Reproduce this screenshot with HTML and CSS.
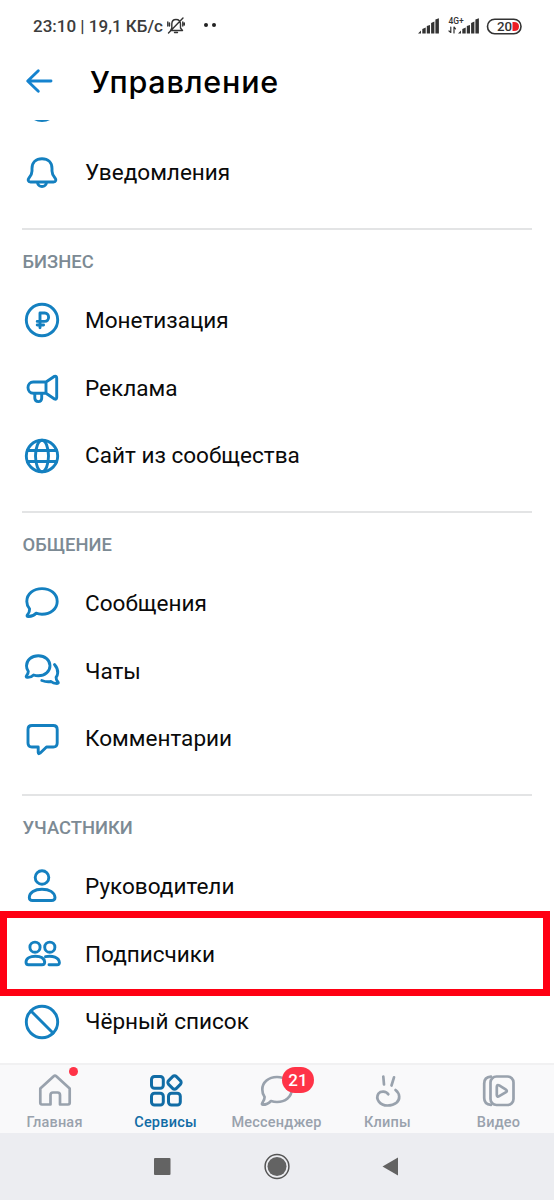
FILE: index.html
```html
<!DOCTYPE html>
<html lang="ru">
<head>
<meta charset="utf-8">
<title>Управление</title>
<link rel="stylesheet" href="styles.css">
</head>
<body>
<div class="screen">
  <div class="status">
    <span class="clock">23:10 | 19,1 КБ/с</span>
    <svg class="mute" width="20" height="20" viewBox="0 0 20 20"><path d="M4.500 14.500H16.500L14.500 12V8Q14.500 3.500 10 3.500Q5.800 3.500 5.800 8V12Z M8.500 16.500H11.500 M2.500 17L17 2 M1.800 6V10 M3.500 7V10 M16.800 6V10 M18.300 7V9"/></svg>
    <span class="dots"><i></i><i></i></span>
    <span class="spacer"></span>
    <svg class="signals" width="106" height="24" viewBox="0 0 106 24">
      <path class="bars" d="M1 20.500L4 17.500V20.500Z M5.300 20.500V16L8.700 14.500V20.500Z M9.800 20.500V13L13 12V20.500Z M14.100 20.500V10L17.400 8.500V20.500Z M18.400 20.500V6.500L21.900 5.300V20.500Z"/>
      <text x="31.500" y="10.500">4G+</text>
      <path class="arrows" d="M33.800 14V19.500L32 18 M37 20V14L38.500 15.800"/>
      <path class="bars" d="M41 20.500L44 17.500V20.500Z M45.300 20.500V16L48.700 14.500V20.500Z M49.800 20.500V13L53 12V20.500Z M54.100 20.500V10L57.400 8.500V20.500Z M58.400 20.500V6.500L61.900 5.300V20.500Z"/>
      <rect class="cell" x="70.500" y="6.200" width="33.500" height="14.500" rx="7.200"/>
      <path class="charge" d="M95.500 9H97Q102 9 102 13.500Q102 18 97 18H95.500Z"/>
      <text class="percent" x="80" y="18.200">20</text>
    </svg>
  </div>
  <header class="header">
    <svg width="28" height="26" viewBox="0 0 28 26"><path d="M26 13H3 M13.300 2.800L2.700 13L13.300 23.200"/></svg>
    <h1>Управление</h1>
  </header>
  <main class="list">
    <div class="row clipped"><svg class="icon" viewBox="0 0 44 44"><circle cx="22" cy="22" r="15.500"/></svg></div>
    <div class="row"><svg class="icon" viewBox="0 0 44 44"><path d="M10.500 31H33.500C36 31 36.500 28.800 35 27C33 24.800 32 23.500 32 20V17.500C32 11.500 28 7.800 22 7.800S12 11.500 12 17.500V20C12 23.500 11 24.800 9 27C7.500 28.800 8 31 10.500 31Z M17.300 31.500C18 34.200 19.500 35.500 22 35.500S26 34.200 26.700 31.500"/></svg>Уведомления</div>
    <section>
      <h2>БИЗНЕС</h2>
      <div class="row"><svg class="icon" viewBox="0 0 44 44"><circle cx="22" cy="22" r="15.700"/><path d="M20 29.700V15H24.800C27 15 28.600 16.700 28.600 19.200S27 23.400 24.800 23.400H17.200 M17.200 27H23.600"/></svg>Монетизация</div>
      <div class="row"><svg class="icon" viewBox="0 0 44 44"><path d="M26 16H13.300C10 16 8 18.600 8 21.600S10 27.300 13.300 27.300H26 M26 16L34.500 10.300Q36.500 9.500 36.700 12V31.500Q36.500 34 34.500 33L26 27.300Z M14.800 28V32.200Q15 35.600 18.300 35.600T21.700 32.200V28"/></svg>Реклама</div>
      <div class="row"><svg class="icon" viewBox="0 0 44 44"><circle cx="22" cy="22" r="15.700"/><ellipse cx="22" cy="22" rx="6.500" ry="15.700"/><path d="M7.500 16.500H36.500M7.500 27.500H36.500"/></svg>Сайт из сообщества</div>
    </section>
    <section>
      <h2>ОБЩЕНИЕ</h2>
      <div class="row"><svg class="icon" viewBox="0 0 44 44"><path d="M22 7.600C30.500 7.600 37.200 13 37.200 20.400S30.500 33.200 22 33.200C19.800 33.200 17.800 32.900 16 32.200C14 34.500 11 35.700 8 35.500C6.800 35.400 6.800 34.600 7.500 33.800C9 32 9.700 29.700 9.600 27.900C7.700 25.700 6.800 23.200 6.800 20.400C6.800 13 13.500 7.600 22 7.600Z"/></svg>Сообщения</div>
      <div class="row"><svg class="icon" viewBox="0 0 44 44"><path d="M18.300 6.700C25 6.700 30 11 30 16.700S25 26.800 18.300 26.800C16.500 26.800 15 26.500 13.600 26C12 27.700 9.500 28.500 7 28.300C6 28.200 6 27.500 6.500 26.800C7.700 25.500 8.300 24 8.300 22.300C7 20.700 6.500 18.900 6.500 16.700C6.500 11 11.500 6.700 18.300 6.700Z M34.500 15.500C36.700 18 38 20.500 37.700 24C37.600 26 37 27 36.100 28.300C36 30 36.700 31.500 37.800 32.700C38.800 34 38.300 34.500 37 34.500C34.500 34.400 32.500 33.800 31 32.500C28 33.200 25 32.700 21.800 31.500"/></svg>Чаты</div>
      <div class="row"><svg class="icon" viewBox="0 0 44 44"><path d="M12 8.500H33.200Q37.200 8.500 37.200 12.500V26Q37.200 30 33.200 30H26.500L20 36.200Q18.300 37.500 18.200 35.500V30H12Q8 30 8 26V12.500Q8 8.500 12 8.500Z"/></svg>Комментарии</div>
    </section>
    <section>
      <h2>УЧАСТНИКИ</h2>
      <div class="row"><svg class="icon" viewBox="0 0 44 44"><circle cx="22" cy="13.500" r="6.800"/><path d="M12.500 36.500H31.500Q35 36.500 35 33.500C34.500 28.500 29.500 25.300 22 25.300S9.500 28.500 9.300 33.500Q9.300 36.500 12.500 36.500Z"/></svg>Руководители</div>
      <div class="row marked"><svg class="icon" viewBox="0 0 44 44"><circle cx="15" cy="15.200" r="5.100"/><circle cx="29.800" cy="15.200" r="5.100"/><path d="M8.500 32.800H22Q24.700 32.800 24.700 30C24.200 26.500 20.500 24.300 15.300 24.300S6.200 26.500 6 30Q6 32.800 8.500 32.800Z M25.500 24.700C32.500 23.300 39 25.500 39.400 30.500Q39.500 32.800 37.200 32.800H29"/></svg>Подписчики</div>
      <div class="row"><svg class="icon" viewBox="0 0 44 44"><circle cx="22" cy="22" r="15.700"/><path d="M11 11L33 33"/></svg>Чёрный список</div>
    </section>
  </main>
  <nav class="tabs">
    <div class="tab"><svg viewBox="0 0 40 40"><path d="M7 33.500Q5.300 33.500 5.300 31.800V17.500L18.700 5.200Q20 4 21.300 5.200L34.700 17.500V31.800Q34.700 33.500 33 33.500H25V24Q25 21.500 22.500 21.500H18Q15.500 21.500 15.500 24V33.500Z"/></svg><b class="dot"></b>Главная</div>
    <div class="tab active"><svg viewBox="0 0 40 40"><rect x="5.500" y="5.500" width="11.800" height="11.800" rx="3"/><rect x="5.500" y="22.300" width="11.800" height="11.800" rx="3"/><rect x="22.500" y="22.300" width="11.800" height="11.800" rx="3"/><rect x="23" y="6" width="11" height="11" rx="2.700" transform="rotate(45 28.500 11.500)"/></svg>Сервисы</div>
    <div class="tab"><svg viewBox="0 0 40 40"><path d="M20 6C28.400 6 34.700 11.200 34.700 18.500S28.400 31 20 31C17.800 31 15.800 30.600 14 30C12 32.200 9 33.700 5.800 33.700Q4.400 33.500 5.300 32C6.700 30 7.700 28 7.600 26C6 23.800 5.300 21.200 5.300 18.500C5.300 11.200 11.600 6 20 6Z"/></svg><b class="count">21</b>Мессенджер</div>
    <div class="tab"><svg viewBox="0 0 40 40"><path d="M15.300 5.500L16 13.500M26 6.300L23.500 14.500M20.300 23.300C18 19.500 12.500 20 10.500 22.500C7 28 12 34.500 19.500 34.500C27.500 34.500 31.500 30 31.200 25.500C31 22.500 29.800 20.800 27.500 19"/></svg>Клипы</div>
    <div class="tab"><svg viewBox="0 0 40 40"><rect x="11.500" y="5.500" width="23" height="28.500" rx="6"/><path d="M12 5.700C7.500 6 5.200 8.500 5.200 12.500V27C5.200 31 7.500 33.500 12 33.800M17.800 15.800V24Q18 26.500 20.200 25.200L27 21.200Q28.700 20 27 18.700L20.200 14.400Q18 13.200 17.800 15.800Z"/></svg>Видео</div>
  </nav>
  <div class="system"><svg width="554" height="67" viewBox="0 0 554 67"><rect x="154" y="25" width="16.500" height="17" rx="1"/><circle cx="277" cy="33.500" r="9.500"/><circle class="ring" cx="277" cy="33.500" r="11.900"/><path d="M382.500 33.500L398 24.500V42.500Z"/></svg></div>
</div>
</body>
</html>
```
FILE: styles.css
```css
*, *::before, *::after { box-sizing: border-box; }
body { margin: 0; background: #fff; color: #0a0a0a; font-family: Roboto, "Noto Sans", sans-serif; }
.screen { width: 554px; height: 1200px; display: flex; flex-direction: column; overflow: hidden; }
svg { display: block; flex: none; fill: none; stroke-linecap: round; stroke-linejoin: round; }

.status { height: 50px; padding: 2px 31px 0 33px; display: flex; align-items: center; color: #3c3c3c; }
.clock { width: 130px; font-size: 17px; font-weight: 500; white-space: nowrap; }
.mute { margin-left: 3px; stroke: #333; stroke-width: 1.400; }
.dots { display: flex; gap: 4px; margin: 0 0 2px 18px; }
.dots i { width: 4px; height: 4px; border-radius: 50%; background: #222; }
.spacer { flex: 1; }
.signals { margin-bottom: 2px; fill: #333; font-size: 8.500px; font-weight: 500; }
.signals .arrows { fill: none; stroke: #333; stroke-width: 1.200; }
.signals .cell { fill: none; stroke: #333; stroke-width: 1.600; }
.signals .charge { fill: #ed1c24; }
.signals .percent { font-size: 13.300px; }

.header { height: 70px; flex: none; padding: 0 0 8px 25px; display: flex; align-items: center; }
.header svg { stroke: #1583cf; stroke-width: 2.900; }
h1 { margin: 2px 0 0 37px; font: 500 30.500px/40px Inter, sans-serif; letter-spacing: .8px; color: #000; white-space: nowrap; }

.list { flex: 1; min-height: 0; overflow: hidden; }
.row { height: 67.670px; padding-left: 20px; display: flex; align-items: center; gap: 21px; font-size: 22.550px; white-space: nowrap; }
.clipped { margin-top: -48.500px; }
.icon { width: 44px; height: 44px; stroke: #1480c0; stroke-width: 2.900; }
section { height: 283px; padding-top: 57.300px; margin-top: 22.500px; position: relative; }
section + section { margin-top: 0; }
section::before { content: ""; position: absolute; left: 22px; right: 22px; top: -1px; height: 2px; background: #e3e4e5; }
h2 { position: absolute; left: 22.500px; top: 21.600px; margin: 0; font-size: 18.400px; line-height: 22px; font-weight: 500; color: #7c8a94; }
.marked { position: relative; }
.marked::after { content: ""; position: absolute; left: 0; top: -9.500px; width: 550px; height: 85px; border: 7.500px solid #ff0013; }

.tabs { height: 70px; flex: none; display: grid; grid-template-columns: repeat(5, 111px); margin-left: -1px; background: #f9f9fa; border-top: 2px solid #f1f1f2; position: relative; z-index: 1; }
.tab { position: relative; padding-top: 6px; display: flex; flex-direction: column; align-items: center; font-size: 14.500px; line-height: 23px; font-weight: 500; color: #99a2ad; letter-spacing: .2px; }
.tab svg { width: 40px; height: 40px; stroke: #99a2ad; stroke-width: 2.700; }
.active { color: #116ca5; }
.active svg { stroke: #116ca5; stroke-width: 3; }
.dot { position: absolute; left: 70px; top: 2px; width: 9px; height: 9px; border-radius: 50%; background: #ff3347; }
.count { position: absolute; left: 61px; top: 2px; width: 32px; height: 26px; border-radius: 13px; background: #ff3347; color: #fff; font-size: 17px; line-height: 26px; font-weight: 500; text-align: center; }
.system { height: 67px; flex: none; background: #ecedf1; }
.system svg { fill: #636363; }
.system .ring { fill: none; stroke: #555; stroke-width: 1.500; }
```
